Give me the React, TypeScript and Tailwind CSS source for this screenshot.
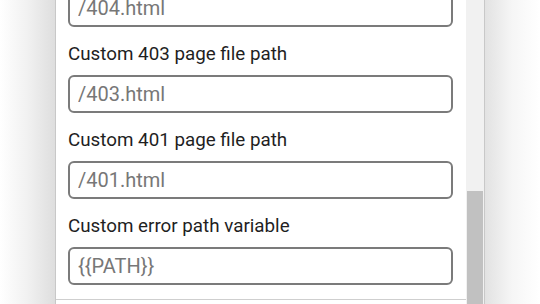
const fields = [
  { label: 'Custom 404 page file path', placeholder: '/404.html' },
  { label: 'Custom 403 page file path', placeholder: '/403.html' },
  { label: 'Custom 401 page file path', placeholder: '/401.html' },
  { label: 'Custom error path variable', placeholder: '{{PATH}}' },
]

export default function App() {
  return (
    <div
      className="flex h-[304px] w-[540px] overflow-hidden bg-white"
      style={{ fontFamily: 'Roboto, "Noto Sans", sans-serif' }}
    >
      {/* left shadow */}
      <div className="h-full w-[55px] shrink-0 bg-gradient-to-r from-white via-[#f1f1f1] to-[#dedede]" />

      {/* panel */}
      <div className="flex h-full w-[430px] shrink-0 border-l border-[#c8c8c8] bg-white">
        <div className="flex w-[410px] flex-col">
          <div className="-mt-[59px] flex flex-col pl-[12px]">
            {fields.map((f) => (
              <div key={f.label} className="flex flex-col">
                <label className="mt-[15px] mb-[9px] h-[24px] text-[18.8px] leading-[24px] text-[#1f1f1f]">
                  {f.label}
                </label>
                <input
                  readOnly
                  placeholder={f.placeholder}
                  className="h-[38px] w-[385px] rounded-[6px] border-2 border-[#7b7b7b] bg-white px-[8px] text-[20px] text-[#333] outline-none placeholder:text-[#777]"
                />
              </div>
            ))}
          </div>
          <div className="mt-[14px] border-t border-[#cfcfcf]" />
        </div>

        {/* scrollbar */}
        <div className="flex w-[19px] shrink-0 flex-col border-r border-[#c8c8c8] bg-[#f1f1f1]">
          <div className="h-[191px]" />
          <div className="mx-[1px] flex-1 bg-[#c1c1c1]" />
        </div>
      </div>

      {/* right shadow */}
      <div className="h-full flex-1 bg-gradient-to-r from-[#e2e2e2] via-[#f6f6f6] to-white" />
    </div>
  )
}
